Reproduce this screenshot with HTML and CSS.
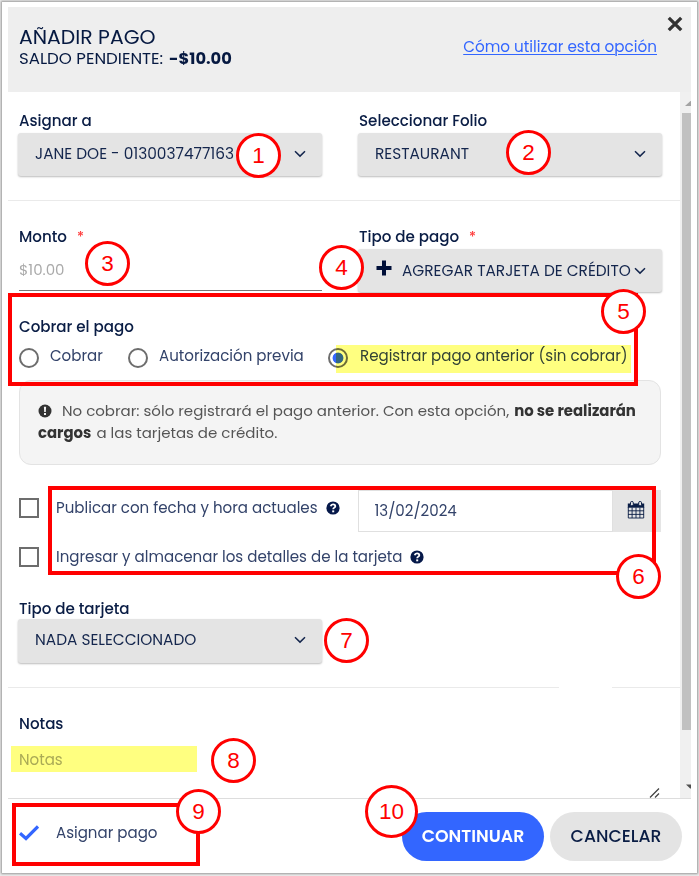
FILE: index.html
```html
<!DOCTYPE html>
<html lang="es">
<head>
<meta charset="utf-8">
<title>Añadir pago</title>
<link rel="stylesheet" href="styles.css">
</head>
<body>
<svg class="defs" width="0" height="0">
  <symbol id="chevron" viewBox="0 0 12 8"><path d="M1 1.300 6 6.100 11 1.300" fill="none" stroke="currentColor" stroke-width="1.500"/></symbol>
  <symbol id="help" viewBox="0 0 14 14"><circle cx="7" cy="7" r="6.600" fill="currentColor"/><path d="M4.700 5.300C5 3.900 5.900 3.400 7 3.400c1.400 0 2.300.8 2.300 1.800C9.300 6.700 7.200 6.600 7.200 8.300" fill="none" stroke="#fff" stroke-width="1.800"/><path d="M6.200 9.400h2v1.900h-2z" fill="#fff"/></symbol>
</svg>
<main class="modal">
  <header class="head">
    <div>
      <h1 class="title">AÑADIR PAGO</h1>
      <p class="balance"><span>SALDO PENDIENTE:</span> <b>-$10.00</b></p>
    </div>
    <a class="how" href="#">Cómo utilizar esta opción</a>
    <svg class="close" viewBox="0 0 16 16"><path d="M1.800 1.800 14.200 14.200M14.200 1.800 1.800 14.200" fill="none" stroke="#333" stroke-width="3.300"/></svg>
  </header>

  <div class="scroll">
    <div class="content">
      <section class="row row-first">
        <div class="field">
          <label class="label">Asignar a</label>
          <div class="select"><span>JANE DOE - 0130037477163</span><svg class="chev"><use href="#chevron"/></svg></div>
        </div>
        <div class="field">
          <label class="label">Seleccionar Folio</label>
          <div class="select"><span>RESTAURANT</span><svg class="chev"><use href="#chevron"/></svg></div>
        </div>
      </section>

      <section class="row row-second">
        <div class="field">
          <label class="label">Monto<i class="req">*</i></label>
          <div class="amount">$10.00</div>
        </div>
        <div class="field">
          <label class="label">Tipo de pago<i class="req">*</i></label>
          <div class="select select-add"><svg class="plus" viewBox="0 0 16 16"><path d="M8 .5v15M.5 8h15" stroke="currentColor" stroke-width="4"/></svg><span>AGREGAR TARJETA DE CRÉDITO</span><svg class="chev"><use href="#chevron"/></svg></div>
        </div>
      </section>

      <section class="charge">
        <span class="label">Cobrar el pago</span>
        <div class="radios">
          <label class="radio radio-a"><i class="ring"></i><span>Cobrar</span></label>
          <label class="radio radio-b"><i class="ring"></i><span>Autorización previa</span></label>
          <label class="radio radio-c"><i class="ring ring-on"></i><span>Registrar pago anterior (sin cobrar)</span></label>
        </div>
      </section>

      <div class="alert">
        <div class="line"><svg class="info" viewBox="0 0 14 14"><circle cx="7" cy="7" r="6.500" fill="currentColor"/><path d="M5.900 2.800h2.200L7.800 8H6.200zM6 9.100h2v2H6z" fill="#f4f4f4"/></svg><span>No cobrar: sólo registrará el pago anterior. Con esta opción,</span><b>no se realizarán</b></div>
        <div class="line"><b>cargos</b><span>a las tarjetas de crédito.</span></div>
      </div>

      <div class="dates">
        <div class="check"><i class="box"></i><span>Publicar con fecha y hora actuales</span><svg class="help"><use href="#help"/></svg></div>
        <div class="date">13/02/2024</div>
        <div class="addon"><svg class="cal" viewBox="0 0 18 18"><path d="M.8 2.500h16.400v4.200H.8z" fill="currentColor"/><path d="M1.300 6v11h15.400V6M1 9.800h16M1 13.400h16M5.100 6.500V17M9 6.500V17M12.900 6.500V17" fill="none" stroke="currentColor" stroke-width=".9"/><rect x="3.500" y=".5" width="2.800" height="4.300" rx="1.200" fill="#e5e5e5" stroke="currentColor" stroke-width="1"/><rect x="11.700" y=".5" width="2.800" height="4.300" rx="1.200" fill="#e5e5e5" stroke="currentColor" stroke-width="1"/></svg></div>
      </div>
      <div class="check store"><i class="box"></i><span>Ingresar y almacenar los detalles de la tarjeta</span><svg class="help"><use href="#help"/></svg></div>

      <div class="field card">
        <label class="label">Tipo de tarjeta</label>
        <div class="select"><span>NADA SELECCIONADO</span><svg class="chev"><use href="#chevron"/></svg></div>
      </div>

      <div class="rule"><i></i><i></i></div>

      <section class="notes">
        <label class="label">Notas</label>
        <div class="textarea"><span>Notas</span><svg class="grip" viewBox="0 0 11 10"><path d="M1 9.500 10 .5M6 9.500l4-4" stroke="#444" stroke-width="1.300" fill="none"/></svg></div>
      </section>
    </div>
    <div class="bar">
      <svg class="up" viewBox="0 0 6 5"><path d="M0 5 5.500 0H6v5z" fill="#a3a3a3"/></svg>
      <div class="thumb"></div>
      <svg class="down" viewBox="0 0 6 5"><path d="M0 0h6v5H5z" fill="#505050"/></svg>
    </div>
  </div>

  <footer class="foot">
    <div class="check assign"><svg class="tick" viewBox="0 0 20 16"><path d="M1 8.300 7 13.500 19 1.500" fill="none" stroke="#36f" stroke-width="3.200"/></svg><span>Asignar pago</span></div>
    <button class="btn btn-primary">CONTINUAR</button>
    <button class="btn">CANCELAR</button>
  </footer>
</main>

<div class="mark mark-radio"></div>
<div class="mark mark-notes"></div>
<div class="frame frame-5"></div>
<div class="frame frame-6"></div>
<div class="frame frame-9"></div>
<div class="pin pin-1">1</div>
<div class="pin pin-2">2</div>
<div class="pin pin-3">3</div>
<div class="pin pin-4">4</div>
<div class="pin pin-5">5</div>
<div class="pin pin-6">6</div>
<div class="pin pin-7">7</div>
<div class="pin pin-8">8</div>
<div class="pin pin-9">9</div>
<div class="pin pin-10">10</div>
</body>
</html>
```
FILE: styles.css
```css
* { box-sizing: border-box; }
body { margin: 0; width: 699px; height: 876px; position: relative; overflow: hidden; background: #ececec; padding: 2px 2px 3px; font: 400 15.050px/22px Poppins, Inter, "Liberation Sans", sans-serif; color: #0a1d45; }
.defs { position: absolute; }
.modal { height: 871px; width: 695px; background: #fff; padding: 5px 6px 0; box-shadow: 0 0 2px 1px #999; display: flex; flex-direction: column; }
span, b { white-space: nowrap; }
i { font-style: normal; }

.head { height: 85px; flex: none; background: #eee; display: flex; padding: 17px 2px 0 11px; color: #061941; }
.title { margin: 0; font-size: 20.400px; font-weight: 400; line-height: 26px; }
.balance { margin: 0; font-size: 16.600px; line-height: 17px; display: flex; gap: 6px; }
.balance b { font-size: 16.300px; font-weight: 700; }
.how { margin: 12px 0 0 auto; font-size: 15.200px; color: #36f; text-decoration: underline; text-decoration-thickness: 1px; text-underline-offset: 2px; height: 22px; white-space: nowrap; }
.close { width: 16px; height: 16px; margin: -8px 6px 0 10px; }

.scroll { display: flex; height: 706px; flex: none; }
.content { width: 672px; flex: none; overflow: hidden; }
.row { display: flex; gap: 36px; padding-left: 10px; }
.row-first { height: 109px; padding-top: 17px; border-bottom: 1px solid #eaeaea; }
.row-second { height: 91px; padding-top: 24px; }
.field { width: 304px; }
.label { display: block; height: 24px; line-height: 24px; font-weight: 500; font-size: 15.100px; padding-left: 1px; color: #0a1d45; }
.req { color: #ff3b3b; margin-left: 10px; font-size: 14px; }
.select { height: 43px; background: #e4e4e4; border-radius: 3px; box-shadow: 0 1px 2px #bbb; display: flex; align-items: center; padding: 0 16px 2px 17px; font-size: 15.350px; color: #14264d; }
.select-add { padding-bottom: 0; }
.chev { width: 12px; height: 8px; margin-left: auto; flex: none; }
.plus { width: 16px; height: 16px; margin: -6px 10px 0 1px; color: #000f38; flex: none; }
.amount { margin-left: 1px; height: 42px; line-height: 41px; border-bottom: 1px solid #777; color: #aaa; font-size: 15px; }

.charge { padding: 23px 0 0 10px; height: 88px; }
.radios { display: flex; height: 22px; align-items: center; margin: 6px 0 0 1px; color: #33436a; }
.radio { display: flex; line-height: 18px; }
.radio-a { width: 109px; }
.radio-b { width: 200px; }
.ring { width: 20px; height: 20px; border: 2px solid #6d6d6d; border-radius: 50%; margin: 0 11px -1px 0; flex: none; position: relative; top: 1px; }
.radio-c .ring { margin-right: 12px; }
.ring-on { background: radial-gradient(circle, #36f 5px, #fff 5.800px); }

.alert { margin: 0 19px 0 11px; height: 85px; border: 1px solid #e3e3e3; border-radius: 12px; background: #f4f4f4; padding: 19px 18px; color: #555; font-size: 15px; }
.line { display: flex; align-items: center; height: 22px; gap: 5px; }
.alert b { color: #333; font-weight: 700; font-size: 14.900px; }
.info { width: 14px; height: 14px; margin-right: 5px; color: #333; flex: none; }

.dates { display: flex; margin: 25px 0 0 11px; height: 42px; }
.check { display: flex; align-items: center; width: 339px; height: 36px; color: #33436a; }
.box { width: 20px; height: 20px; border: 2px solid #6d6d6d; margin-right: 17px; flex: none; }
.help { width: 14px; height: 14px; margin-left: 8px; color: #06194a; flex: none; }
.date { width: 255px; height: 42px; border: 1px solid #e0e0e0; padding-left: 15.500px; line-height: 40px; color: #33436a; }
.addon { width: 48px; height: 42px; background: #e5e5e5; padding: 11px 0 0 14px; }
.cal { width: 18px; height: 18px; color: #0a1d45; display: block; }
.store { margin: 7px 0 0 11px; width: 500px; }
.card { margin: 22px 0 0 10px; }
.card .label { height: 22px; }
.card .select { height: 44px; }
.rule { display: flex; gap: 53px; height: 1px; margin-top: 24px; }
.rule i:first-child { width: 551px; background: #eaeaea; }
.rule i:last-child { flex: 1; background: #eaeaea; }
.notes { padding: 24px 0 0 10px; }
.textarea { height: 62px; display: flex; justify-content: space-between; padding: 13px 20px 0 1px; color: #aaa; }
.grip { width: 11px; height: 10px; align-self: flex-end; }
.bar { width: 11px; background: #f0f0f0; padding-left: 2px; display: flex; flex-direction: column; align-items: flex-end; }
.up { width: 6px; height: 5px; margin-top: 9px; }
.thumb { width: 9px; height: 617px; margin-top: 7px; background: #c1c1c1; }
.down { width: 5px; height: 5px; margin-top: 54px; }

.foot { height: 73px; border-top: 1px solid #ddd; display: flex; padding: 13px 9px 0 11px; }
.assign { width: 383px; margin-top: 3px; }
.tick { width: 20px; height: 16px; margin-right: 17px; }
.btn { width: 132px; height: 49px; border: 0; border-radius: 25px; background: #e4e4e4; color: #0a1d45; font: 500 17.300px Poppins, Inter, sans-serif; padding: 0 0 2px; }
.btn-primary { width: 142px; margin-right: 6px; background: #36f; color: #fff; font-weight: 600; }

.mark { position: absolute; background: #ffff80; mix-blend-mode: multiply; }
.mark-radio { left: 336px; top: 345px; width: 295px; height: 28px; }
.mark-notes { left: 11px; top: 746px; width: 186px; height: 26px; }
.frame { position: absolute; border: 4px solid #f00; }
.frame-5 { left: 8px; top: 293px; width: 630px; height: 93px; }
.frame-6 { left: 48px; top: 486px; width: 608px; height: 89px; }
.frame-9 { left: 12px; top: 803px; width: 188px; height: 63px; }
.pin { position: absolute; width: 45px; height: 45px; border: 3px solid #f00; border-radius: 50%; background: #fff; color: #f00; font: 22.500px/40px "Liberation Sans", sans-serif; text-align: center; }
.pin-1 { left: 236px; top: 133px; }
.pin-2 { left: 506px; top: 130px; }
.pin-3 { left: 85px; top: 241px; }
.pin-4 { left: 319px; top: 245px; }
.pin-5 { left: 601px; top: 289px; }
.pin-6 { left: 616px; top: 554px; }
.pin-7 { left: 324px; top: 618px; }
.pin-8 { left: 211px; top: 738px; }
.pin-9 { left: 176px; top: 789px; }
.pin-10 { left: 365px; top: 785px; width: 53px; height: 53px; line-height: 48px; }
```
